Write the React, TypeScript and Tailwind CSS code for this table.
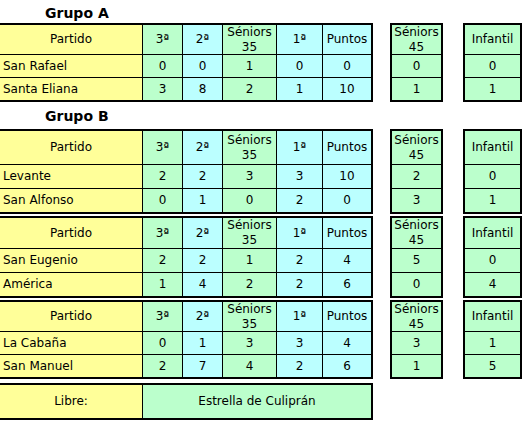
import React from "react";

const Y = "bg-[#ffff99]";
const G = "bg-[#bbffcc]";
const C = "bg-[#bbffff]";

type Col = { w: string; bg: string; br: string };
const cols: Col[] = [
  { w: "w-[143px]", bg: Y, br: "border-r border-black" },
  { w: "w-[40px]", bg: G, br: "border-r border-black" },
  { w: "w-[40px]", bg: C, br: "border-r border-black" },
  { w: "w-[54px]", bg: G, br: "border-r border-black" },
  { w: "w-[46px]", bg: C, br: "border-r border-black" },
  { w: "w-[48px]", bg: C, br: "" },
];

type Block = {
  h: [string, string, string];
  rows: [string, string, string, string, string, string, string, string][];
};

const Senior = ({ n }: { n: string }) => (
  <div className="flex flex-col items-center leading-[15px]">
    <span>Séniors</span>
    <span>{n}</span>
  </div>
);

function Main({ b }: { b: Block }) {
  const header: React.ReactNode[] = ["Partido", "3ª", "2ª", <Senior n="35" />, "1ª", "Puntos"];
  return (
    <div className="w-[373px] border-y-2 border-r-2 border-black flex flex-col">
      <div className={`${b.h[0]} flex border-b border-black`}>
        {cols.map((c, i) => (
          <div key={i} className={`${c.w} ${c.bg} ${c.br} flex items-center justify-center`}>
            {header[i]}
          </div>
        ))}
      </div>
      {b.rows.map((r, ri) => (
        <div key={ri} className={`${b.h[ri + 1]} flex ${ri === 0 ? "border-b border-black" : ""}`}>
          {cols.map((c, i) => (
            <div
              key={i}
              className={`${c.w} ${c.bg} ${c.br} flex items-center ${i === 0 ? "justify-start pl-[3px]" : "justify-center"}`}
            >
              {r[i]}
            </div>
          ))}
        </div>
      ))}
    </div>
  );
}

function Side({ b, w, head, idx }: { b: Block; w: string; head: React.ReactNode; idx: number }) {
  return (
    <div className={`${w} border-2 border-black flex flex-col ${G}`}>
      <div className={`${b.h[0]} flex items-center justify-center border-b border-black`}>{head}</div>
      <div className={`${b.h[1]} flex items-center justify-center border-b border-black`}>{b.rows[0][idx]}</div>
      <div className={`${b.h[2]} flex items-center justify-center`}>{b.rows[1][idx]}</div>
    </div>
  );
}

function Row({ b, cls }: { b: Block; cls: string }) {
  return (
    <div className={`flex ${cls}`}>
      <Main b={b} />
      <div className="ml-[17px]">
        <Side b={b} w="w-[53px]" head={<Senior n="45" />} idx={6} />
      </div>
      <div className="ml-[20px]">
        <Side b={b} w="w-[59px]" head={<span>Infantil</span>} idx={7} />
      </div>
    </div>
  );
}

const A: Block = {
  h: ["h-[30px]", "h-[23px]", "h-[22px]"],
  rows: [
    ["San Rafael", "0", "0", "1", "0", "0", "0", "0"],
    ["Santa Eliana", "3", "8", "2", "1", "10", "1", "1"],
  ],
};
const B1: Block = {
  h: ["h-[34px]", "h-[24px]", "h-[23px]"],
  rows: [
    ["Levante", "2", "2", "3", "3", "10", "2", "0"],
    ["San Alfonso", "0", "1", "0", "2", "0", "3", "1"],
  ],
};
const B2: Block = {
  h: ["h-[31px]", "h-[24px]", "h-[23px]"],
  rows: [
    ["San Eugenio", "2", "2", "1", "2", "4", "5", "0"],
    ["América", "1", "4", "2", "2", "6", "0", "4"],
  ],
};
const B3: Block = {
  h: ["h-[30px]", "h-[23px]", "h-[22px]"],
  rows: [
    ["La Cabaña", "0", "1", "3", "3", "4", "3", "1"],
    ["San Manuel", "2", "7", "4", "2", "6", "1", "5"],
  ],
};

export default function App() {
  return (
    <div className="w-[523px] h-[421px] bg-white text-black text-[12px] leading-[15px] overflow-hidden" style={{ fontFamily: '"DejaVu Sans", Verdana, sans-serif' }}>
      <div className="h-[23px] flex items-center pt-[3px] pl-[45px] font-bold text-[14px]">Grupo A</div>
      <Row b={A} cls="" />
      <div className="h-[27px] flex items-center pt-[2px] pl-[45px] font-bold text-[14px]">Grupo B</div>
      <Row b={B1} cls="" />
      <Row b={B2} cls="mt-[2px]" />
      <Row b={B3} cls="mt-[2px]" />
      <div className="mt-[4px] w-[373px] h-[37px] border-y-2 border-r-2 border-black flex">
        <div className={`w-[143px] ${Y} border-r border-black flex items-center justify-center`}>Libre:</div>
        <div className={`flex-1 ${G} flex items-center justify-center`}>Estrella de Culiprán</div>
      </div>
    </div>
  );
}
